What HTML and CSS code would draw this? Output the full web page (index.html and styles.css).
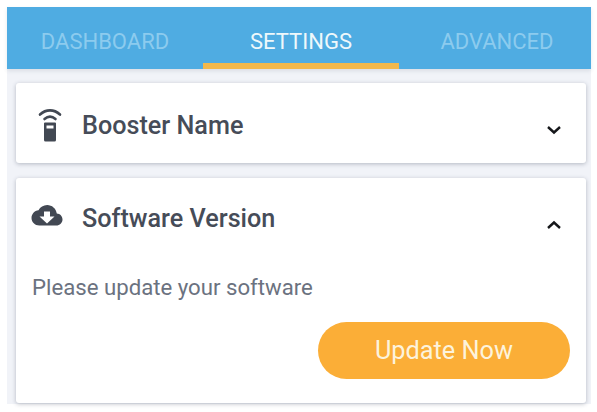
FILE: index.html
```html
<!DOCTYPE html>
<html lang="en">
<head>
  <meta charset="UTF-8" />
  <meta name="viewport" content="width=device-width, initial-scale=1" />
  <title>Settings</title>
  <link rel="stylesheet" href="styles.css">
</head>
<body>
  <div class="app">
    <nav class="tabs">
      <div class="tab">DASHBOARD</div>
      <div class="tab active">SETTINGS</div>
      <div class="tab tab-last">ADVANCED</div>
    </nav>
    <div class="content">
      <section class="card">
        <div class="card-head head-booster">
          <svg class="icon" width="24" height="36" viewBox="0 0 24 36">
            <path d="M2 8.5C8 3 16 3 22 8.5" fill="none" stroke="#424853" stroke-width="2.6" stroke-linecap="round" />
            <path d="M6.5 13C10 10 14 10 17.5 13" fill="none" stroke="#424853" stroke-width="2.6" stroke-linecap="round" />
            <path fill-rule="evenodd" fill="#424853" d="M7 16.500h10a1 1 0 0 1 1 1V34a1.500 1.500 0 0 1-1.500 1.500h-9A1.500 1.500 0 0 1 6 34V17.500a1 1 0 0 1 1-1zM8.500 19.500v3h7v-3z" />
          </svg>
          <h2 class="card-title">Booster Name</h2>
          <svg class="chevron" width="16" height="10" viewBox="0 0 16 10">
            <path d="M2 2l6 5.500L14 2" fill="none" stroke="#15171a" stroke-width="2.400" />
          </svg>
        </div>
      </section>
      <section class="card">
        <div class="card-head head-software">
          <svg class="icon" width="32" height="24" viewBox="0 0 32 24">
            <path fill-rule="evenodd" fill="#424853" d="M25.800 9.500C25 4.500 21 1 16.200 1c-3.800 0-7 2.100-8.700 5.200C3.500 6.700 0.500 9.900 0.500 14c0 4.300 3.500 7.500 7.800 7.500h16.900c3.600 0 6.300-2.900 6.300-6.100 0-3.200-2.500-5.700-5.700-5.900zM13 7.500h6v5h4.500L16 19.500l-7.500-7h4.500z" />
          </svg>
          <h2 class="card-title">Software Version</h2>
          <svg class="chevron" width="16" height="10" viewBox="0 0 16 10">
            <path d="M2 8l6-5.500L14 8" fill="none" stroke="#15171a" stroke-width="2.400" />
          </svg>
        </div>
        <p class="message">Please update your software</p>
        <div class="actions">
          <button class="update">Update Now</button>
        </div>
      </section>
    </div>
  </div>
</body>
</html>
```

FILE: styles.css
```css
body {
  margin: 0;
  padding: 7px 6px 7px 7px;
  background: #fff;
  font-family: Roboto, 'Liberation Sans', sans-serif;
}

.app {
  background: #f1f3f8;
}

.tabs {
  display: grid;
  grid-template-columns: 196px 196px 1fr;
  height: 62px;
  background: #4facE2;
  box-shadow: 0 2px 4px rgba(60, 70, 90, 0.12);
}

.tab {
  padding-top: 22px;
  box-sizing: border-box;
  text-align: center;
  font-size: 22px;
  line-height: 26px;
  color: #8ccbee;
}

.tab.active {
  color: #eef8fb;
  border-bottom: 6px solid #f2b84b;
}

.tab-last {
  padding-left: 4px;
}

.content {
  display: flex;
  flex-direction: column;
  gap: 15px;
  padding: 14px 5px 1px 9px;
}

.card {
  background: #fff;
  border-radius: 3px;
  box-shadow: 0 1px 4px rgba(50, 60, 80, 0.32);
}

.card-head {
  display: flex;
  align-items: center;
  height: 80px;
  padding: 0 24px 0 15px;
}

.icon {
  flex: none;
}

.head-booster .icon {
  margin: 2px 20px 0 7px;
}

.head-booster .card-title {
  margin-top: 4px;
}

.head-software .icon {
  margin: 0 19px 4px 0;
}

.card-title {
  flex: 1;
  margin: 0;
  font-size: 25.2px;
  font-weight: 500;
  color: #464c58;
}

.chevron {
  flex: none;
  margin-top: 14px;
}

.message {
  margin: 0;
  padding: 15px 16px 0;
  font-size: 22.2px;
  line-height: 28px;
  color: #6b7280;
}

.actions {
  display: flex;
  justify-content: flex-end;
  padding: 21px 16px 24px;
}

.update {
  width: 252px;
  height: 57px;
  border: none;
  border-radius: 29px;
  background: #fbae37;
  color: #fdf3dc;
  font-family: inherit;
  font-size: 25.3px;
}
```
